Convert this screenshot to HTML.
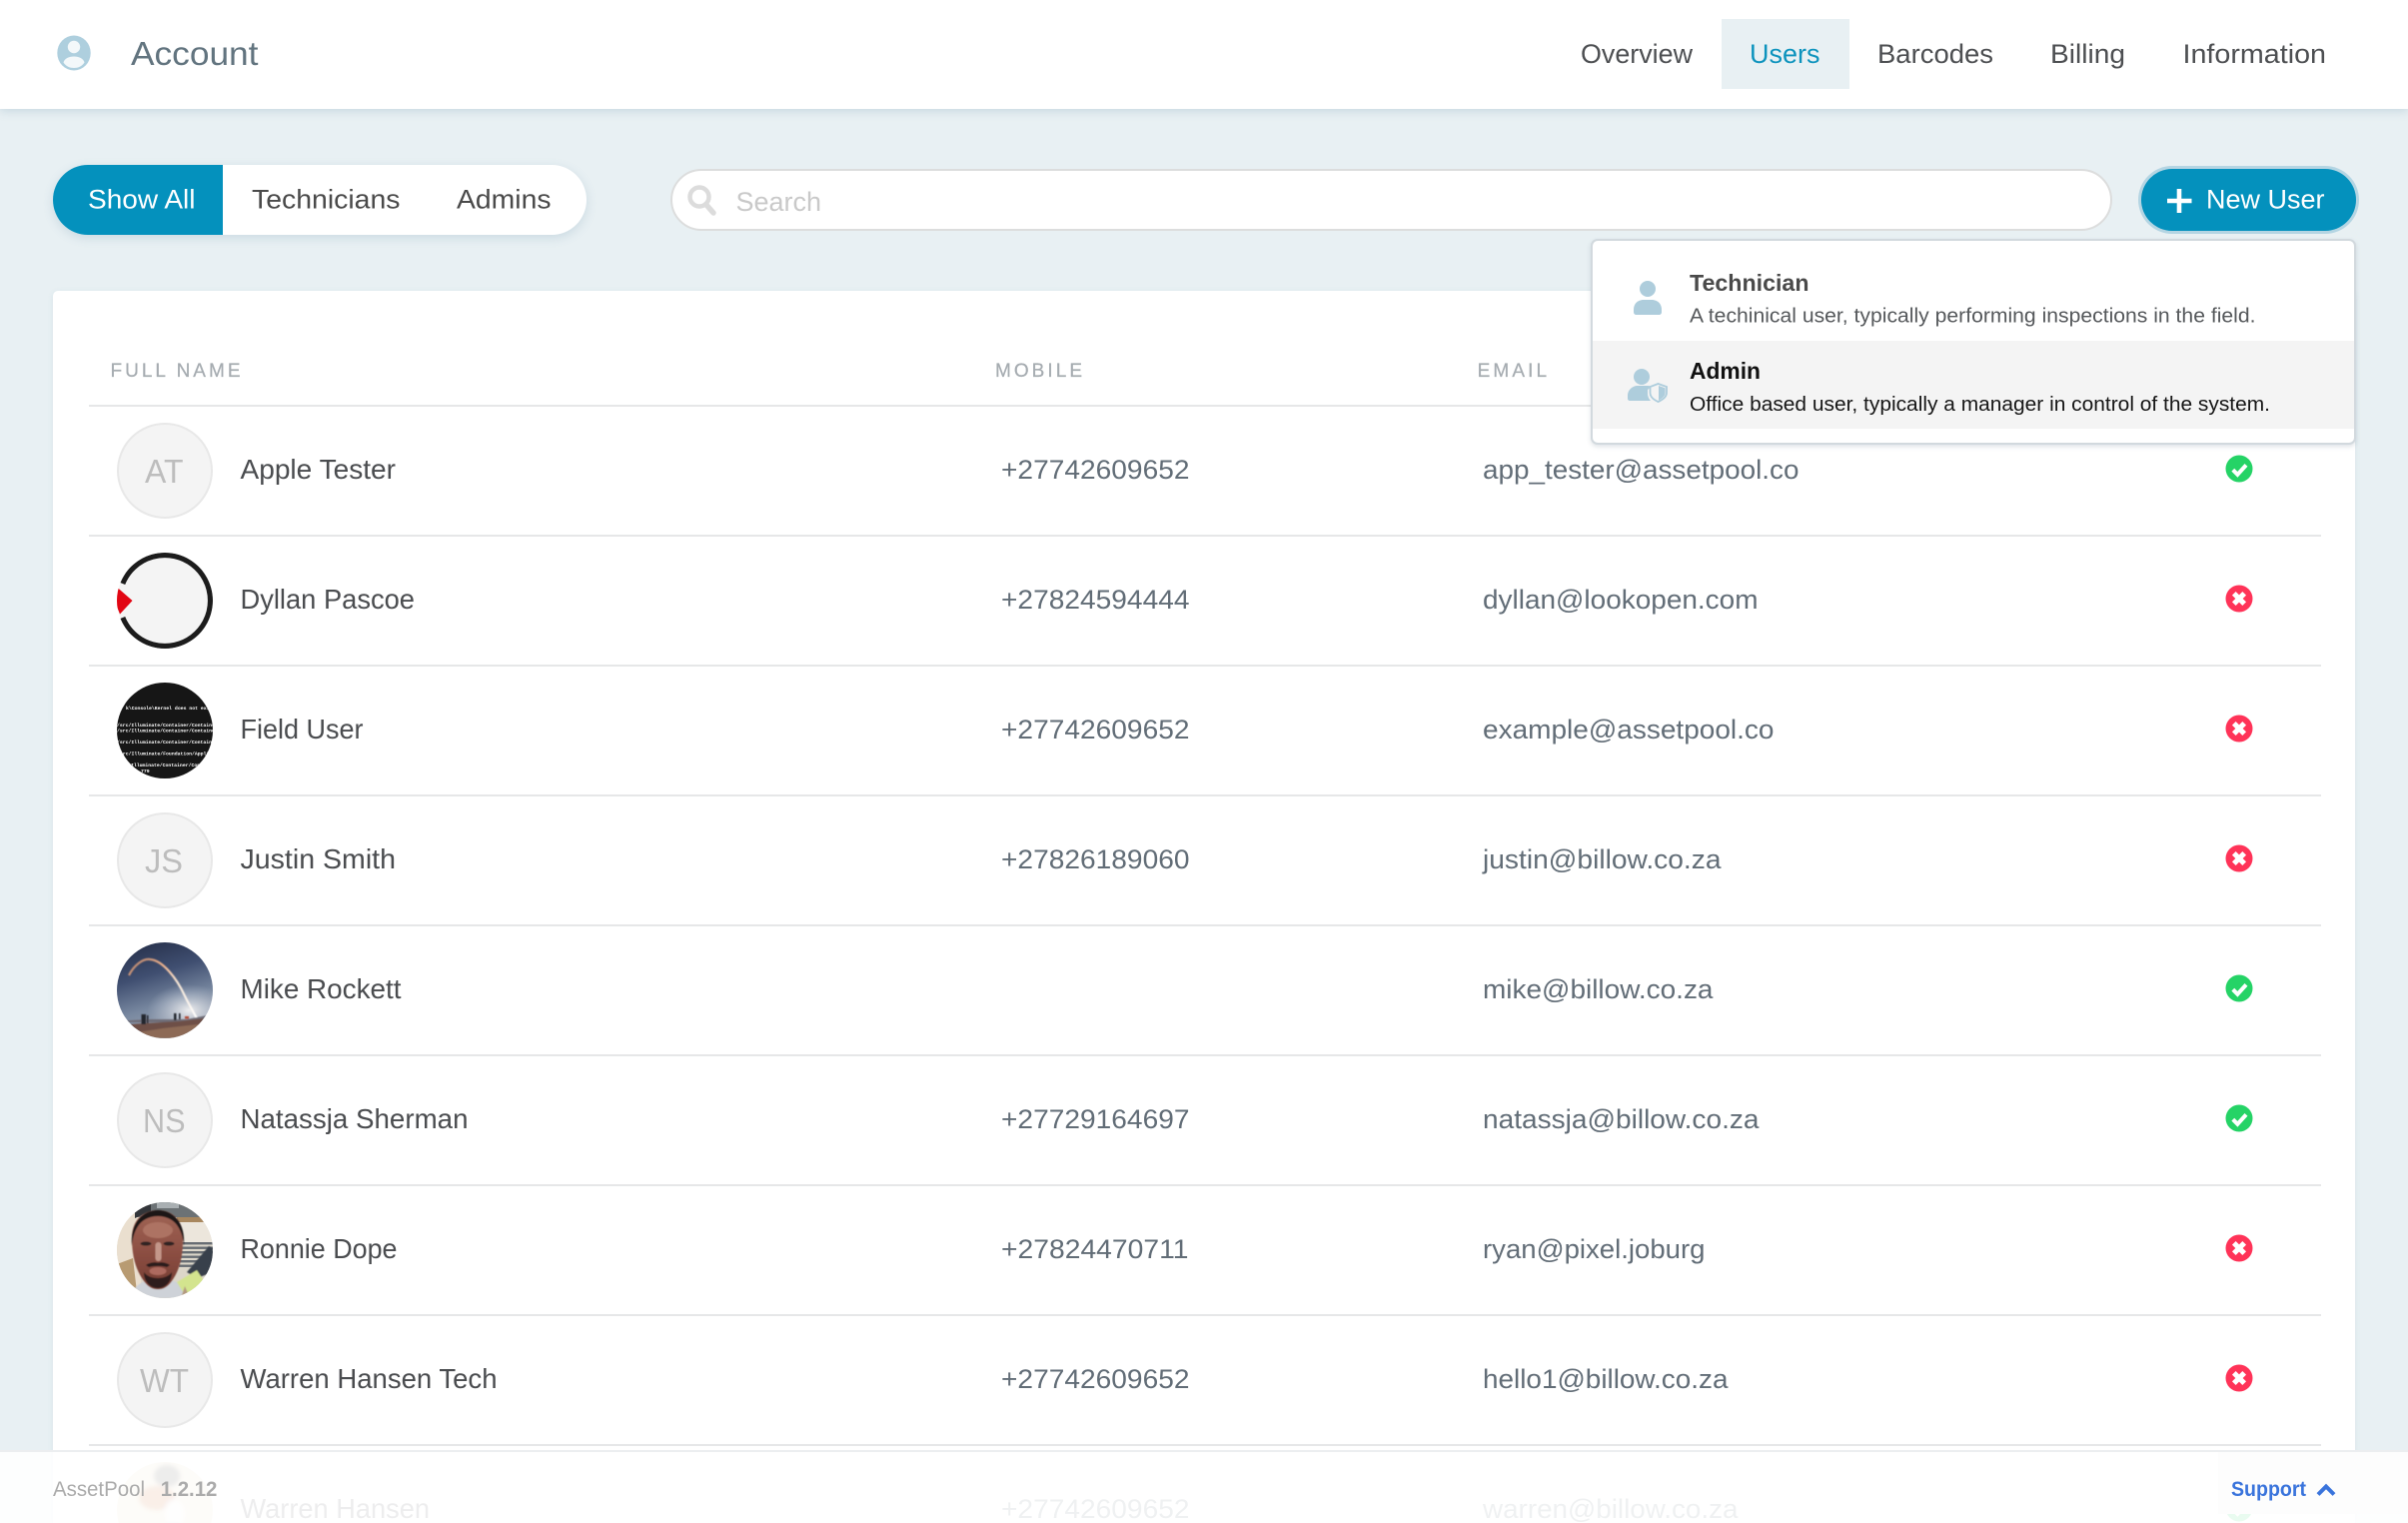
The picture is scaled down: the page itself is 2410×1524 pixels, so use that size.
<!DOCTYPE html>
<html lang="en">
<head>
<meta charset="utf-8">
<title>Account - Users</title>
<style>
html,body{margin:0;padding:0}
body{position:relative;width:2410px;height:1524px;overflow:hidden;background:#e8f0f3;font-family:"Liberation Sans",sans-serif}
.abs{position:absolute;box-sizing:border-box}
svg.layer{position:absolute;left:0;top:0;width:2410px;height:1524px}
svg text{font-family:"Liberation Sans",sans-serif}
.nav{font-size:27px;fill:#4d4f52}
.tab{font-size:27px;fill:#4a4a4a}
.th{font-size:19px;fill:#a6acb1;stroke:#a6acb1;stroke-width:.25px}
.name{font-size:27.5px;fill:#4a4c4f}
.ph{font-size:27px;fill:#626d77}
.ini{font-size:33px;fill:#bdbdbd}
.mono{font-family:"Liberation Mono",monospace!important;font-size:4.8px;font-weight:bold;fill:#fff}
</style>
</head>
<body>

<!-- header -->
<div class="abs" style="left:0;top:0;width:2410px;height:109px;background:#fff;box-shadow:0 2px 9px rgba(110,150,175,.28)"></div>
<div class="abs" style="left:1723px;top:19px;width:128px;height:70px;background:#e8f0f3"></div>

<!-- filter pill -->
<div class="abs" style="left:53px;top:165px;width:534px;height:70px;border-radius:35px;background:#fff;box-shadow:0 3px 10px rgba(100,140,170,.22)"></div>
<div class="abs" style="left:53px;top:165px;width:170px;height:70px;border-radius:35px 0 0 35px;background:#0491bd"></div>

<!-- search -->
<div class="abs" style="left:671px;top:169px;width:1443px;height:62px;border:2px solid #dcdddd;border-radius:31px;background:#fff"></div>

<!-- new user -->
<div class="abs" style="left:2143px;top:169px;width:215px;height:62px;border-radius:31px;background:#0491bd;box-shadow:0 0 0 3px #b4d5e3"></div>

<!-- card -->
<div class="abs" style="left:53px;top:291px;width:2304px;height:1233px;border-radius:5px 5px 0 0;background:#fff;box-shadow:0 1px 6px rgba(110,150,175,.12)"></div>

<svg class="layer" viewBox="0 0 2410 1524" xmlns="http://www.w3.org/2000/svg">
  <defs>
    <clipPath id="c"><circle cx="48" cy="48" r="48"/></clipPath>
    <linearGradient id="sky" x1="0" y1="0" x2="0.3" y2="1">
      <stop offset="0" stop-color="#222b44"/>
      <stop offset=".4" stop-color="#3f4e70"/>
      <stop offset=".72" stop-color="#77879f"/>
      <stop offset="1" stop-color="#9aa3b2"/>
    </linearGradient>
    <radialGradient id="glow" cx=".5" cy=".5" r=".5">
      <stop offset="0" stop-color="#f2f2f2" stop-opacity=".95"/>
      <stop offset="1" stop-color="#c0c8d8" stop-opacity="0"/>
    </radialGradient>
    <linearGradient id="arc" x1="0" y1="0" x2="1" y2="1">
      <stop offset="0" stop-color="#a87a68"/>
      <stop offset=".3" stop-color="#eab08c"/>
      <stop offset=".55" stop-color="#f4e4d4"/>
      <stop offset="1" stop-color="#ffffff"/>
    </linearGradient>
    <linearGradient id="face" x1="0" y1="0" x2="0" y2="1">
      <stop offset="0" stop-color="#a06556"/>
      <stop offset=".5" stop-color="#8e5044"/>
      <stop offset="1" stop-color="#743c32"/>
    </linearGradient>
    <filter id="b1"><feGaussianBlur stdDeviation=".6"/></filter>
    <filter id="b05"><feGaussianBlur stdDeviation=".4"/></filter>
    <filter id="b03"><feGaussianBlur stdDeviation=".25"/></filter>
    <filter id="b2"><feGaussianBlur stdDeviation="2"/></filter>
    <g id="ok"><circle r="13.5" fill="#25d366"/><path d="M-6.2 1.2L-1.6 5.8L7 -3.6" fill="none" stroke="#fff" stroke-width="4"/></g>
    <g id="no"><circle r="13.5" fill="#ff3358"/><path d="M-5.2 -5.2L5.2 5.2M5.2 -5.2L-5.2 5.2" fill="none" stroke="#fff" stroke-width="5.2"/></g>
  </defs>

  <!-- header content -->
  <ellipse cx="74" cy="53" rx="16.7" ry="17.5" fill="#aecfde"/>
  <circle cx="74" cy="47" r="6.2" fill="#f3f8fa"/>
  <path d="M63.5 62.5C64.5 58.5 69 56.5 74 56.5S83.5 58.5 84.5 62.5C82 66.5 78 68 74 68S66 66.5 63.5 62.5Z" fill="#f3f8fa"/>
  <text x="131" y="65" font-size="33" fill="#62747f" textLength="127.5" lengthAdjust="spacingAndGlyphs">Account</text>
  <text class="nav" x="1582" y="63" textLength="112" lengthAdjust="spacingAndGlyphs">Overview</text>
  <text class="nav" x="1751" y="63" textLength="70.5" lengthAdjust="spacingAndGlyphs" style="fill:#0d93bd">Users</text>
  <text class="nav" x="1879" y="63" textLength="116" lengthAdjust="spacingAndGlyphs">Barcodes</text>
  <text class="nav" x="2052" y="63" textLength="75" lengthAdjust="spacingAndGlyphs">Billing</text>
  <text class="nav" x="2184.5" y="63" textLength="143.5" lengthAdjust="spacingAndGlyphs">Information</text>

  <!-- tabs -->
  <text class="tab" x="88" y="208.5" textLength="107.5" lengthAdjust="spacingAndGlyphs" style="fill:#fff">Show All</text>
  <text class="tab" x="252" y="208.5" textLength="148.5" lengthAdjust="spacingAndGlyphs">Technicians</text>
  <text class="tab" x="457" y="208.5" textLength="94.5" lengthAdjust="spacingAndGlyphs">Admins</text>

  <!-- search -->
  <circle cx="700" cy="197" r="9.5" fill="none" stroke="#dcdcdc" stroke-width="4.5"/>
  <path d="M707 205L714 213" stroke="#dcdcdc" stroke-width="5.5" stroke-linecap="round"/>
  <text x="736.5" y="211" font-size="27" fill="#c9c9c9" textLength="85.5" lengthAdjust="spacingAndGlyphs">Search</text>

  <!-- new user -->
  <path d="M2181 189V213M2169 201H2193.5" stroke="#fff" stroke-width="4.6" fill="none"/>
  <text x="2208" y="208.5" font-size="27" fill="#fff" textLength="118.5" lengthAdjust="spacingAndGlyphs">New User</text>

  <!-- table heads -->
  <text class="th" x="110.5" y="377" textLength="130">FULL NAME</text>
  <text class="th" x="996" y="377" textLength="87">MOBILE</text>
  <text class="th" x="1478.6" y="377" textLength="69.5">EMAIL</text>

  <!-- lines -->
  <g fill="#e6e7e8">
    <rect x="89" y="405" width="2234" height="2"/>
    <rect x="89" y="535" width="2234" height="2"/>
    <rect x="89" y="665" width="2234" height="2"/>
    <rect x="89" y="795" width="2234" height="2"/>
    <rect x="89" y="925" width="2234" height="2"/>
    <rect x="89" y="1055" width="2234" height="2"/>
    <rect x="89" y="1185" width="2234" height="2"/>
    <rect x="89" y="1315" width="2234" height="2"/>
    <rect x="89" y="1445" width="2234" height="2"/>
  </g>

  <!-- avatars -->
  <g fill="#f4f4f4" stroke="#e8e8e8" stroke-width="2">
    <circle cx="165" cy="471" r="47"/>
    <circle cx="165" cy="861" r="47"/>
    <circle cx="165" cy="1121" r="47"/>
    <circle cx="165" cy="1381" r="47"/>
  </g>
  <text class="ini" x="145" y="483" textLength="38.5" lengthAdjust="spacingAndGlyphs">AT</text>
  <text class="ini" x="145" y="873" textLength="38" lengthAdjust="spacingAndGlyphs">JS</text>
  <text class="ini" x="143" y="1133" textLength="42.5" lengthAdjust="spacingAndGlyphs">NS</text>
  <text class="ini" x="140" y="1393" textLength="49" lengthAdjust="spacingAndGlyphs">WT</text>

  <!-- Dylan logo -->
  <g transform="translate(117,553)">
    <g clip-path="url(#c)">
      <circle cx="48" cy="48" r="48" fill="#f4f4f4"/>
      <path d="M5.8 31A45.5 45.5 0 1 1 5.8 65" fill="none" stroke="#1c1c1c" stroke-width="5.2"/>
      <path d="M0 34.5L15.5 48L3 61.5L0 54Z" fill="#e20613"/>
    </g>
  </g>

  <!-- Field user terminal -->
  <g transform="translate(117,683)">
    <g clip-path="url(#c)">
      <rect width="96" height="96" fill="#161616"/>
      <g filter="url(#b03)"><text class="mono" x="9" y="27">k\Console\Kernel does not exist</text>
      <text class="mono" x="0" y="44">/src/Illuminate/Container/Container.php</text>
      <text class="mono" x="0" y="49.5">/src/Illuminate/Container/Container.php</text>
      <text class="mono" x="0" y="61">/src/Illuminate/Container/Container.php</text>
      <text class="mono" x="3" y="72.5">src/Illuminate/Foundation/Application.php</text>
      <text class="mono" x="14" y="84">Illuminate/Container/Container.php</text>
      <text class="mono" x="24" y="90">779</text></g>
    </g>
  </g>

  <!-- Mike rocket photo -->
  <g transform="translate(117,943)">
    <g clip-path="url(#c)">
      <rect width="96" height="96" fill="url(#sky)"/>
      <ellipse cx="72" cy="68" rx="42" ry="26" fill="url(#glow)"/>
      <g filter="url(#b05)">
        <path d="M12 33C17 23 26 16 33 17C46 18 60 36 68 53.7C72 62 76 69 80 76" fill="none" stroke="url(#arc)" stroke-width="2.2"/>
        <path d="M0 79L30 77L70 77L96 72V80H0Z" fill="#6e6c76"/>
        <path d="M0 83L28 81L62 79L96 75V96H0Z" fill="#6e5046"/>
        <path d="M8 92L46 86L90 81L80 96H20Z" fill="#8d6a56"/>
        <path d="M24.5 72h4.5v10h-4.5zM30 73h1.5v8h-1.5zM57 71h2.5v7h-2.5zM62 71h1.6v6h-1.6z" fill="#23262e"/>
        <path d="M68 74h4v2.5h-4z" fill="#b14a35"/>
      </g>
    </g>
  </g>

  <!-- Ronnie photo -->
  <g transform="translate(117,1203)">
    <g clip-path="url(#c)">
      <rect width="96" height="96" fill="#dcd6c9"/>
      <rect x="0" y="0" width="24" height="96" fill="#eadfcf"/>
      <path d="M0 62L16 56L20 90L0 96Z" fill="#b89b72"/>
      <path d="M18 0H96V15H18Z" fill="#6c7275"/>
      <path d="M18 0H34V9L18 16Z" fill="#33363a"/>
      <path d="M40 0H62V6H40Z" fill="#a9afb2"/>
      <path d="M60 15H96V20H60Z" fill="#a8875e"/>
      <path d="M60 20H96V40H60Z" fill="#ece6dc"/>
      <g fill="#676d73" filter="url(#b03)"><rect x="62" y="40" width="34" height="2.4"/><rect x="62" y="44.5" width="34" height="2.4"/><rect x="62" y="49" width="34" height="2.4"/><rect x="62" y="53.5" width="34" height="2.4"/><rect x="62" y="58" width="34" height="2.4"/><rect x="62" y="62.5" width="34" height="2.4"/></g>
      <g filter="url(#b05)"><path d="M70 70L92 44L96 46V70L80 76Z" fill="#39414c"/>
      <path d="M14 96C16 84 24 80 32 78L52 78C62 80 70 82 80 96Z" fill="#ced2d8"/>
      <path d="M60 80L80 68L88 80L70 96Z" fill="#d3e48e"/>
      <path d="M68 84L73 96H64Z" fill="#b39a80"/></g>
      <g filter="url(#b1)">
        <path d="M15 36C15 16 28 8 41 8C54 8 67 16 66 38C66 56 62 70 54 80C50 85 46 87 41 87C36 87 32 85 28 80C20 70 15 56 15 36Z" fill="url(#face)"/>
        <path d="M15 44C13 20 26 8 41 8C56 8 69 20 67 44C66 30 60 14 41 14C22 14 16 30 15 44Z" fill="#1d1819"/>
        <ellipse cx="41" cy="28" rx="15" ry="8" fill="#ad7363"/>
        <rect x="38.5" y="40" width="6" height="19" rx="3" fill="#c4978a"/>
        <ellipse cx="29" cy="41.5" rx="5.5" ry="2" fill="#2e2020"/>
        <ellipse cx="52" cy="41.5" rx="5.5" ry="2" fill="#2e2020"/>
        <path d="M29 63C33 60 38 60 41 60.5C44 60 49 60 53 63L50 65C45 63.5 37 63.5 32 65Z" fill="#2a1a1a"/>
        <path d="M27 70C30 74 35 76 41 76C47 76 52 74 55 70C55 79 49 86 41 86C33 86 27 79 27 70Z" fill="#2e1e1c"/>
        <ellipse cx="41" cy="69" rx="8.5" ry="4" fill="#ad6a5e"/>
      </g>
    </g>
  </g>

  <!-- Warren rider photo -->
  <g transform="translate(117,1463)">
    <g clip-path="url(#c)">
      <rect width="96" height="96" fill="#e8dcbd"/>
      <g filter="url(#b2)">
        <ellipse cx="50" cy="14" rx="13" ry="11" fill="#4a4640"/>
        <ellipse cx="40" cy="36" rx="18" ry="12" fill="#c5601c"/>
        <ellipse cx="58" cy="52" rx="10" ry="14" fill="#f4f2ee"/>
        <ellipse cx="56" cy="80" rx="18" ry="18" fill="#2f5590"/>
        <rect x="0" y="64" width="30" height="32" fill="#b88a55"/>
      </g>
    </g>
  </g>

  <!-- names -->
  <text class="name" x="240.5" y="479" textLength="155.5" lengthAdjust="spacingAndGlyphs">Apple Tester</text>
  <text class="name" x="240.5" y="609" textLength="174.5" lengthAdjust="spacingAndGlyphs">Dyllan Pascoe</text>
  <text class="name" x="240.5" y="739" textLength="123" lengthAdjust="spacingAndGlyphs">Field User</text>
  <text class="name" x="240.5" y="869" textLength="155.5" lengthAdjust="spacingAndGlyphs">Justin Smith</text>
  <text class="name" x="240.5" y="999" textLength="161" lengthAdjust="spacingAndGlyphs">Mike Rockett</text>
  <text class="name" x="240.5" y="1129" textLength="228" lengthAdjust="spacingAndGlyphs">Natassja Sherman</text>
  <text class="name" x="240.5" y="1259" textLength="157" lengthAdjust="spacingAndGlyphs">Ronnie Dope</text>
  <text class="name" x="240.5" y="1389" textLength="257" lengthAdjust="spacingAndGlyphs">Warren Hansen Tech</text>
  <text class="name" x="240.5" y="1519" textLength="189.5" lengthAdjust="spacingAndGlyphs">Warren Hansen</text>

  <!-- phones -->
  <text class="ph" x="1002" y="479" textLength="188.5" lengthAdjust="spacingAndGlyphs">+27742609652</text>
  <text class="ph" x="1002" y="609" textLength="188.5" lengthAdjust="spacingAndGlyphs">+27824594444</text>
  <text class="ph" x="1002" y="739" textLength="188.5" lengthAdjust="spacingAndGlyphs">+27742609652</text>
  <text class="ph" x="1002" y="869" textLength="188.5" lengthAdjust="spacingAndGlyphs">+27826189060</text>
  <text class="ph" x="1002" y="1129" textLength="188.5" lengthAdjust="spacingAndGlyphs">+27729164697</text>
  <text class="ph" x="1002" y="1259" textLength="187.5" lengthAdjust="spacingAndGlyphs">+27824470711</text>
  <text class="ph" x="1002" y="1389" textLength="188.5" lengthAdjust="spacingAndGlyphs">+27742609652</text>
  <text class="ph" x="1002" y="1519" textLength="188.5" lengthAdjust="spacingAndGlyphs">+27742609652</text>

  <!-- emails -->
  <text class="ph" x="1484" y="479" textLength="316.5" lengthAdjust="spacingAndGlyphs">app_tester@assetpool.co</text>
  <text class="ph" x="1484" y="609" textLength="275.5" lengthAdjust="spacingAndGlyphs">dyllan@lookopen.com</text>
  <text class="ph" x="1484" y="739" textLength="291.5" lengthAdjust="spacingAndGlyphs">example@assetpool.co</text>
  <text class="ph" x="1484" y="869" textLength="238.5" lengthAdjust="spacingAndGlyphs">justin@billow.co.za</text>
  <text class="ph" x="1484" y="999" textLength="230.5" lengthAdjust="spacingAndGlyphs">mike@billow.co.za</text>
  <text class="ph" x="1484" y="1129" textLength="276.5" lengthAdjust="spacingAndGlyphs">natassja@billow.co.za</text>
  <text class="ph" x="1484" y="1259" textLength="222.5" lengthAdjust="spacingAndGlyphs">ryan@pixel.joburg</text>
  <text class="ph" x="1484" y="1389" textLength="245.5" lengthAdjust="spacingAndGlyphs">hello1@billow.co.za</text>
  <text class="ph" x="1484" y="1519" textLength="255.5" lengthAdjust="spacingAndGlyphs">warren@billow.co.za</text>

  <!-- status -->
  <use href="#ok" x="2241" y="469"/>
  <use href="#no" x="2241" y="599"/>
  <use href="#no" x="2241" y="729"/>
  <use href="#no" x="2241" y="859"/>
  <use href="#ok" x="2241" y="989"/>
  <use href="#ok" x="2241" y="1119"/>
  <use href="#no" x="2241" y="1249"/>
  <use href="#no" x="2241" y="1379"/>
  <use href="#ok" x="2241" y="1509"/>
</svg>

<!-- dropdown -->
<div class="abs" style="left:1592px;top:239px;width:766px;height:205.5px;background:#fff;border:2px solid #d2d9de;border-radius:7px;box-shadow:0 2px 5px rgba(80,100,120,.18)"></div>
<div class="abs" style="left:1594px;top:341px;width:762px;height:88px;background:#f4f4f4"></div>
<svg class="layer" viewBox="0 0 2410 1524" xmlns="http://www.w3.org/2000/svg">
  <circle cx="1649" cy="289" r="8" fill="#aecddc"/>
  <path d="M1635 310C1635 303 1640 300 1645 300H1653C1658 300 1663 303 1663 310V312C1663 314 1662 315 1660 315H1638C1636 315 1635 314 1635 312Z" fill="#aecddc"/>
  <circle cx="1643" cy="377" r="8" fill="#aecddc"/>
  <path d="M1629 396C1629 390 1634 386 1639 386H1648C1650 386 1651 386 1652 387L1649 390V394C1649 396 1650 399 1652 401H1631C1630 401 1629 400 1629 399Z" fill="#aecddc"/>
  <path d="M1659.5 384L1668 387V393C1668 397 1664 400 1659.5 402C1655 400 1651.5 397 1651.5 393V387Z" fill="#f4f4f4" stroke="#aecddc" stroke-width="1.8"/>
  <path d="M1660 386L1666.6 388.4V393C1666.6 396.4 1663.5 398.8 1660 400.5Z" fill="#aecddc"/>
  <text x="1691" y="291" font-size="23" font-weight="bold" fill="#4a4a4a" textLength="119.5" lengthAdjust="spacingAndGlyphs">Technician</text>
  <text x="1691" y="322.5" font-size="20.5" fill="#55585b" textLength="566.5" lengthAdjust="spacingAndGlyphs">A techinical user, typically performing inspections in the field.</text>
  <text x="1691" y="379" font-size="23" font-weight="bold" fill="#111" textLength="71" lengthAdjust="spacingAndGlyphs">Admin</text>
  <text x="1691" y="411" font-size="20.5" fill="#161616" textLength="581" lengthAdjust="spacingAndGlyphs">Office based user, typically a manager in control of the system.</text>
</svg>

<!-- footer -->
<div class="abs" style="left:0;top:1451px;width:2410px;height:73px;background:rgba(255,255,255,.9);border-top:2px solid #eceef0"></div>
<div class="abs" style="left:2220px;top:1453px;width:190px;height:62px;background:#fdfdfd"></div>
<svg class="layer" viewBox="0 0 2410 1524" xmlns="http://www.w3.org/2000/svg">
  <text x="53" y="1497" font-size="21" fill="#ababab" textLength="92" lengthAdjust="spacingAndGlyphs">AssetPool</text>
  <text x="160.7" y="1497" font-size="21" font-weight="bold" fill="#ababab" textLength="56.7" lengthAdjust="spacingAndGlyphs">1.2.12</text>
  <text x="2233" y="1497" font-size="21" font-weight="bold" fill="#3a74dc" textLength="75" lengthAdjust="spacingAndGlyphs">Support</text>
  <path d="M2320 1495.5L2328 1487.5L2336 1495.5" fill="none" stroke="#3a74dc" stroke-width="4"/>
</svg>

</body>
</html>
